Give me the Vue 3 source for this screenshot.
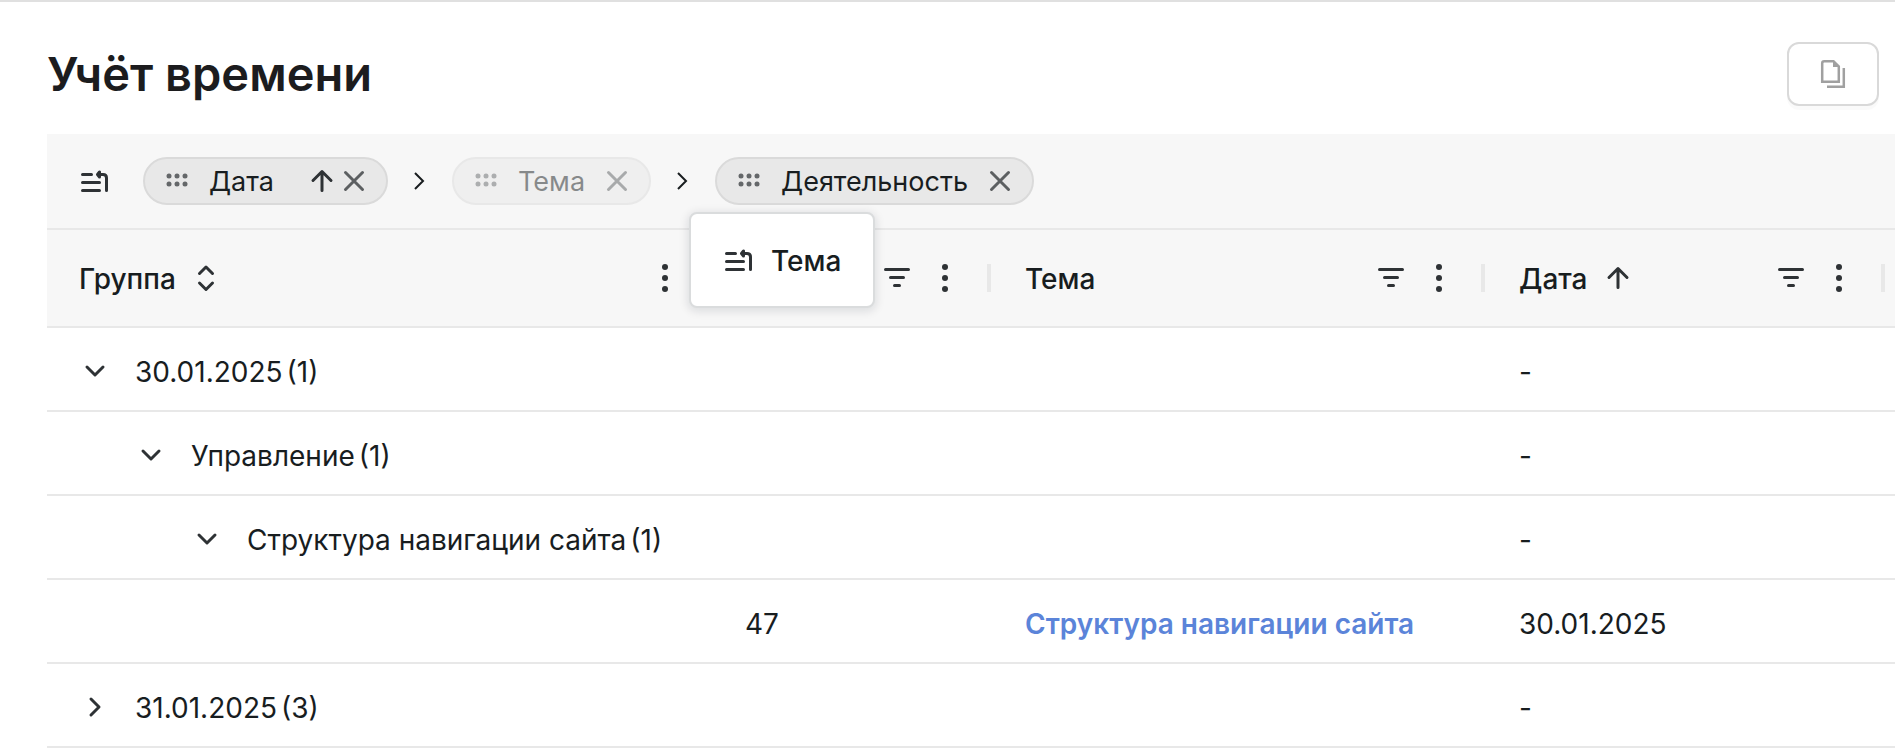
<script setup>
import { ref } from 'vue'

const ICONS = {
  group: [
    { d: 'M3.5 9.5H12.5M3.5 17.5H20.5M3.5 25.5H20.5' },
    { d: 'M20 9.5H24Q27.5 9.5 27.5 13V25.5' },
    { d: 'M18.5 9.5L20.5 7V12Z', fill: true },
  ],
  up: [{ d: 'M16 25.5V6.5M7 15.5L16 6.5L25 15.5' }],
  close: [{ d: 'M7.5 7.5L24.5 24.5M24.5 7.5L7.5 24.5' }],
  sort: [{ d: 'M9.5 11.5L16 5L22.5 11.5M9.5 21L16 27.5L22.5 21' }],
  filter: [{ d: 'M4.5 7.5H27.5M9.5 15.5H22.5M13.5 23.5H18.5' }],
  down: [{ d: 'M8 12L16 20L24 12' }],
  right: [{ d: 'M12 8L20 16L12 24' }],
  next: [{ d: 'M11 8L19 16L11 24' }],
}

const chips = [
  { label: 'Дата', sorted: true },
  { label: 'Тема', dragging: true },
  { label: 'Деятельность' },
]

const columns = [
  { key: 'group', label: 'Группа', icon: 'sort', filter: false },
  { key: 'id', label: 'ID', icon: '', filter: true },
  { key: 'topic', label: 'Тема', icon: '', filter: true },
  { key: 'date', label: 'Дата', icon: 'up', filter: true },
]

const rows = ref([
  { level: 0, label: '30.01.2025', count: 1, open: true, date: '-' },
  { level: 1, label: 'Управление', count: 1, open: true, date: '-' },
  { level: 2, label: 'Структура навигации сайта', count: 1, open: true, date: '-' },
  { id: '47', topic: 'Структура навигации сайта', date: '30.01.2025' },
  { level: 0, label: '31.01.2025', count: 3, open: false, date: '-' },
])
</script>

<template>
  <main class="page">
    <header class="top">
      <h1>Учёт времени</h1>
      <button class="copy" type="button" aria-label="Копировать">
        <svg width="32" height="32" viewBox="0 0 32 32" fill="none" stroke="#a0a0a0" stroke-width="2.5">
          <path d="M7.2 3.2H16.5L21.8 8.5V23.8H5.2V5.2Q5.2 3.2 7.2 3.2Z" />
          <path d="M16 2V9H23Z" fill="#a0a0a0" stroke="none" />
          <path d="M26.8 10V28.8H10" />
        </svg>
      </button>
    </header>

    <section class="grid">
      <div class="panel">
        <svg class="icon lead" viewBox="0 0 32 32">
          <path v-for="(p, i) in ICONS.group" :key="i" :d="p.d" :class="{ solid: p.fill }" />
        </svg>
        <template v-for="(chip, n) in chips" :key="chip.label">
          <svg v-if="n" class="icon next" viewBox="0 0 32 32"><path :d="ICONS.next[0].d" /></svg>
          <div class="chip" :class="{ dragging: chip.dragging }">
            <svg class="icon grip" viewBox="0 0 32 32">
              <template v-for="y in [11, 19]" :key="y">
                <circle v-for="x in [8, 16, 24]" :key="x" :cx="x" :cy="y" r="2.5" />
              </template>
            </svg>
            <span class="chip-label">{{ chip.label }}</span>
            <svg v-if="chip.sorted" class="icon sorted" viewBox="0 0 32 32"><path :d="ICONS.up[0].d" /></svg>
            <button class="plain close" type="button" :aria-label="'Убрать ' + chip.label">
              <svg class="icon" viewBox="0 0 32 32"><path :d="ICONS.close[0].d" /></svg>
            </button>
          </div>
        </template>
        <div class="ghost">
          <svg class="icon" viewBox="0 0 32 32">
            <path v-for="(p, i) in ICONS.group" :key="i" :d="p.d" :class="{ solid: p.fill }" />
          </svg>
          <span class="ghost-label">Тема</span>
        </div>
      </div>

      <table>
        <colgroup>
          <col class="c-group"><col class="c-id"><col class="c-topic"><col class="c-date"><col>
        </colgroup>
        <thead>
          <tr>
            <th v-for="col in columns" :key="col.key" scope="col">
              <div class="head">
                <span class="head-label">{{ col.label }}</span>
                <svg v-if="col.icon" class="icon" viewBox="0 0 32 32"><path :d="ICONS[col.icon][0].d" /></svg>
                <span class="tools">
                  <button v-if="col.filter" class="plain" type="button" :aria-label="'Фильтр ' + col.label">
                    <svg class="icon" viewBox="0 0 32 32"><path :d="ICONS.filter[0].d" /></svg>
                  </button>
                  <button class="plain" type="button" :aria-label="'Меню ' + col.label">
                    <svg class="icon dots" viewBox="0 0 32 32">
                      <circle v-for="y in [5, 16, 27]" :key="y" cx="16" :cy="y" r="3" />
                    </svg>
                  </button>
                  <i class="sep" :class="{ hidden: col.key === 'group' }"></i>
                </span>
              </div>
            </th>
            <th></th>
          </tr>
        </thead>
        <tbody>
          <tr v-for="(row, i) in rows" :key="i">
            <td>
              <div v-if="row.label" class="node" :class="'level-' + row.level">
                <button class="plain toggle" type="button" :aria-expanded="row.open" :aria-label="row.label" @click="row.open = !row.open">
                  <svg class="icon" viewBox="0 0 32 32"><path :d="ICONS[row.open ? 'down' : 'right'][0].d" /></svg>
                </button>
                <span class="name">{{ row.label }}</span>
                <span class="count">({{ row.count }})</span>
              </div>
            </td>
            <td>{{ row.id }}</td>
            <td><a v-if="row.topic" href="#">{{ row.topic }}</a></td>
            <td>{{ row.date }}</td>
            <td></td>
          </tr>
        </tbody>
      </table>
    </section>
  </main>
</template>

<style>
body {
  overflow: hidden;
  background: #fff;
}
</style>

<style scoped>
.page {
  border-top: 2px solid #e0e0e0;
  padding-left: 47px;
  font-family: Inter, "Liberation Sans", sans-serif;
  font-size: 28px;
  line-height: 36px;
  color: #181d1f;
}
.top {
  display: flex;
  align-items: center;
  justify-content: space-between;
  height: 132px;
  padding: 12px 16px 0 0;
  box-sizing: border-box;
}
h1 {
  margin: 0;
  font-size: 47px;
  line-height: 60px;
  font-weight: 600;
  color: #1c1c1e;
}
.copy {
  display: flex;
  align-items: center;
  justify-content: center;
  width: 92px;
  height: 64px;
  padding: 0;
  border: 2px solid #d9d9d9;
  border-radius: 12px;
  background: #fff;
  box-shadow: 0 4px 0 rgba(0, 0, 0, 0.02);
}
.icon {
  display: block;
  flex: none;
  width: 32px;
  height: 32px;
  fill: none;
  stroke: #2e3235;
  stroke-width: 3;
  stroke-linecap: round;
  stroke-linejoin: round;
}
.icon circle {
  fill: #2e3235;
  stroke: none;
}
.icon .solid {
  fill: #2e3235;
}
.plain {
  display: block;
  padding: 0;
  border: 0;
  background: none;
}
.panel {
  position: relative;
  display: flex;
  align-items: center;
  height: 94px;
  padding-left: 32px;
  background: #f7f7f7;
  border-bottom: 2px solid #e8e8e8;
}
.lead {
  margin-right: 32px;
}
.next {
  margin: 0 16px;
  stroke: #181d1f;
  stroke-width: 2;
  stroke-linecap: butt;
  stroke-linejoin: miter;
}
.chip {
  display: flex;
  align-items: center;
  height: 44px;
  padding: 0 16px;
  border: 2px solid #dadada;
  border-radius: 24px;
  background: #e8e8e8;
  font-size: 27px;
}
.dragging {
  opacity: 0.5;
}
.grip circle {
  fill: #646769;
}
.chip-label {
  margin: 0 16px;
}
.chip-label,
.ghost-label,
.head-label {
  padding-top: 2px;
}
.sorted {
  margin-left: 16px;
}
.close .icon {
  stroke: #5c5f61;
}
.ghost {
  position: absolute;
  z-index: 1;
  top: 78px;
  left: 642px;
  display: flex;
  align-items: center;
  gap: 16px;
  height: 92px;
  padding: 0 32px;
  border: 2px solid #dadcdd;
  border-radius: 8px;
  background: #fff;
  box-shadow: 0 2px 8px 2px rgba(0, 20, 40, 0.1);
  font-weight: 500;
}
table {
  width: 100%;
  table-layout: fixed;
  border-collapse: separate;
  border-spacing: 0;
}
.c-group {
  width: 664px;
}
.c-id {
  width: 280px;
}
.c-topic {
  width: 494px;
}
.c-date {
  width: 400px;
}
th,
td {
  padding: 0 0 0 34px;
  border-bottom: 2px solid #e8e8e8;
  text-align: left;
  white-space: nowrap;
}
th:first-child,
td:first-child {
  padding-left: 32px;
}
th:last-child,
td:last-child {
  padding: 0;
}
th {
  height: 96px;
  background: #f7f7f7;
  font-weight: 500;
}
td {
  height: 76px;
  padding-top: 6px;
}
.head {
  display: flex;
  align-items: center;
  gap: 14px;
}
.tools {
  display: flex;
  align-items: center;
  gap: 16px;
  margin-left: auto;
}
.sep {
  width: 4px;
  height: 28px;
  margin-left: 10px;
  background: #e8e8e8;
}
.hidden {
  visibility: hidden;
}
.node {
  display: flex;
  align-items: center;
}
.toggle {
  margin-bottom: 2px;
}
.level-1 {
  padding-left: 56px;
}
.level-2 {
  padding-left: 112px;
}
.name {
  margin: 0 4px 0 24px;
}
a {
  color: #5b84d9;
  font-weight: 600;
  text-decoration: none;
}
</style>
